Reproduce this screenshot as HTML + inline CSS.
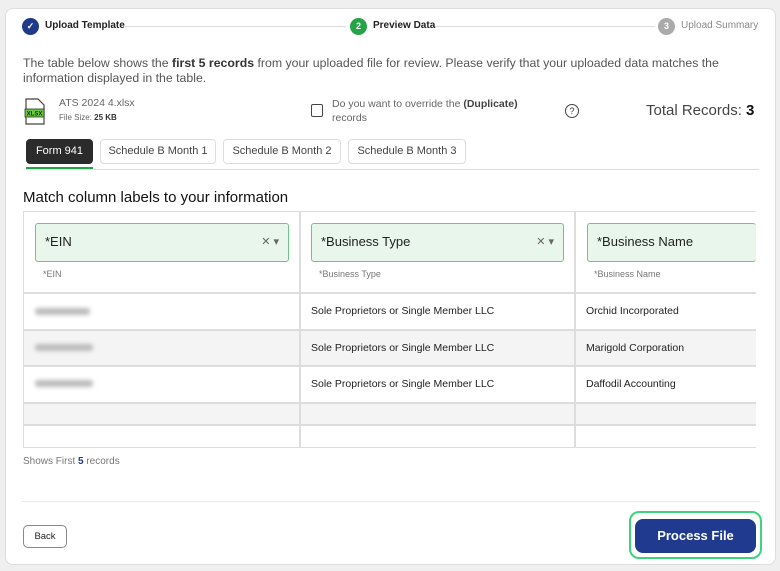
<!DOCTYPE html>
<html><head><style>
*{box-sizing:border-box;margin:0;padding:0}
body{width:780px;height:571px;background:#efefef;font-family:"Liberation Sans",sans-serif;color:#333;position:relative;overflow:hidden}
.card{position:absolute;left:5px;top:8px;width:771px;height:557px;background:#fff;border:1px solid #ddd;border-radius:8px}
.a{position:absolute}
.circ{position:absolute;width:17px;height:17px;border-radius:50%;color:#fff;font-size:9px;text-align:center;line-height:17px;font-weight:bold}
.line{position:absolute;height:1px;background:#ddd;top:26px}
.tab{position:absolute;top:139px;height:25px;border:1px solid #ddd;border-radius:4px;font-size:11px;line-height:23px;text-align:center;color:#444}
.sel{position:absolute;top:223px;height:39px;border:1.5px solid #6cc48a;background:#e8f6ec;border-radius:3px;font-size:13px;color:#222;padding:10px 9px}
.sub{position:absolute;top:269px;font-size:9px;color:#777}
.cell{position:absolute;font-size:10.5px;color:#222}
.blur{position:absolute;height:7px;background:#bbb;filter:blur(2px);border-radius:3px}
</style></head><body>
<div class="card"></div>
<div class="circ" style="left:22px;top:18px;background:#1f3a8a">✓</div>
<div class="a" style="left:45px;top:20px;font-size:10px;font-weight:bold;color:#222">Upload Template</div>
<div class="line" style="left:124px;width:222px"></div>
<div class="circ" style="left:350px;top:18px;background:#22a447">2</div>
<div class="a" style="left:373px;top:20px;font-size:10px;font-weight:bold;color:#222">Preview Data</div>
<div class="line" style="left:435px;width:220px"></div>
<div class="circ" style="left:658px;top:18px;background:#aaa">3</div>
<div class="a" style="left:681px;top:20px;font-size:10px;color:#888">Upload Summary</div>

<div class="a" style="left:23px;top:56px;width:740px;font-size:12.3px;line-height:15px;color:#555">The table below shows the <b style="color:#333">first 5 records</b> from your uploaded file for review. Please verify that your uploaded data matches the information displayed in the table.</div>

<svg class="a" style="left:24px;top:98px" width="22" height="27" viewBox="0 0 22 27"><path d="M2 1h12l6 6v19H2z" fill="#fff" stroke="#444" stroke-width="1.2"/><rect x="1" y="11" width="19" height="8" fill="#6c3" stroke="#333" stroke-width=".8"/><text x="10.5" y="17.5" font-size="6" text-anchor="middle" font-family="Liberation Sans" font-weight="bold" fill="#222">XLSX</text></svg>
<div class="a" style="left:59px;top:97px;font-size:10.5px;color:#666">ATS 2024 4.xlsx</div>
<div class="a" style="left:59px;top:113px;font-size:8px;color:#666">File Size: <b style="color:#333">25 KB</b></div>
<div class="a" style="left:311px;top:104px;width:12px;height:13px;border:1.5px solid #444;border-radius:2px"></div>
<div class="a" style="left:332px;top:97px;font-size:10.5px;line-height:14px;color:#666">Do you want to override the <b style="color:#444">(Duplicate)</b><br>records</div>
<div class="a" style="left:565px;top:104px;width:14px;height:14px;border:1.3px solid #444;border-radius:50%;font-size:9px;text-align:center;line-height:12px">?</div>
<div class="a" style="left:646px;top:102px;font-size:15px;color:#444">Total Records: <b style="color:#111">3</b></div>

<div class="tab" style="left:26px;width:67px;background:#2b2b2b;color:#fff;border-color:#2b2b2b">Form 941</div>
<div class="a" style="left:26px;top:167px;width:67px;height:2px;background:#22a447"></div>
<div class="a" style="left:26px;top:169px;width:733px;height:1px;background:#ddd"></div>
<div class="tab" style="left:100px;width:116px">Schedule B Month 1</div>
<div class="tab" style="left:223px;width:118px">Schedule B Month 2</div>
<div class="tab" style="left:348px;width:118px">Schedule B Month 3</div>

<div class="a" style="left:23px;top:189px;font-size:15px;color:#111">Match column labels to your information</div>

<div class="a" style="left:23px;top:211px;width:733px;height:237px;border:1.5px solid #ddd;border-right:none"></div>
<div class="a" style="left:24px;top:329px;width:732px;height:37px;background:#f4f4f4"></div>
<div class="a" style="left:24px;top:402px;width:732px;height:23px;background:#f4f4f4"></div>
<div class="a" style="left:23px;top:292px;width:733px;height:1.5px;background:#ddd"></div>
<div class="a" style="left:23px;top:329px;width:733px;height:1.5px;background:#ddd"></div>
<div class="a" style="left:23px;top:365px;width:733px;height:1.5px;background:#ddd"></div>
<div class="a" style="left:23px;top:402px;width:733px;height:1.5px;background:#ddd"></div>
<div class="a" style="left:23px;top:424px;width:733px;height:1.5px;background:#ddd"></div>
<div class="a" style="left:299px;top:212px;width:1.5px;height:236px;background:#ddd"></div>
<div class="a" style="left:574px;top:212px;width:1.5px;height:236px;background:#ddd"></div>

<div class="sel" style="left:35px;width:254px">*EIN<span style="position:absolute;right:9px;top:11px;font-size:11px;color:#666">✕ ▾</span></div>
<div class="sel" style="left:311px;width:253px">*Business Type<span style="position:absolute;right:9px;top:11px;font-size:11px;color:#666">✕ ▾</span></div>
<div class="sel" style="left:587px;width:169px;border-right:none">*Business Name</div>
<div class="sub" style="left:43px">*EIN</div>
<div class="sub" style="left:319px">*Business Type</div>
<div class="sub" style="left:594px">*Business Name</div>

<div class="blur" style="left:35px;top:308px;width:55px"></div>
<div class="blur" style="left:35px;top:344px;width:58px"></div>
<div class="blur" style="left:35px;top:380px;width:58px"></div>
<div class="cell" style="left:311px;top:305px">Sole Proprietors or Single Member LLC</div>
<div class="cell" style="left:311px;top:342px">Sole Proprietors or Single Member LLC</div>
<div class="cell" style="left:311px;top:378px">Sole Proprietors or Single Member LLC</div>
<div class="cell" style="left:586px;top:305px">Orchid Incorporated</div>
<div class="cell" style="left:586px;top:342px">Marigold Corporation</div>
<div class="cell" style="left:586px;top:378px">Daffodil Accounting</div>

<div class="a" style="left:23px;top:456px;font-size:10px;color:#777">Shows First <b style="color:#1f3a8a">5</b> records</div>
<div class="a" style="left:22px;top:501px;width:738px;height:1px;background:#e8e8e8"></div>
<div class="a" style="left:23px;top:525px;width:44px;height:23px;border:1.3px solid #888;border-radius:5px;font-size:9.5px;text-align:center;line-height:21px;color:#222">Back</div>
<div class="a" style="left:629px;top:511px;width:133px;height:48px;border:2.5px solid #3ad47c;border-radius:10px"></div>
<div class="a" style="left:635px;top:519px;width:121px;height:34px;background:#1f3a8f;border-radius:8px;color:#fff;font-size:13px;font-weight:bold;text-align:center;line-height:34px">Process File</div>
</body></html>
